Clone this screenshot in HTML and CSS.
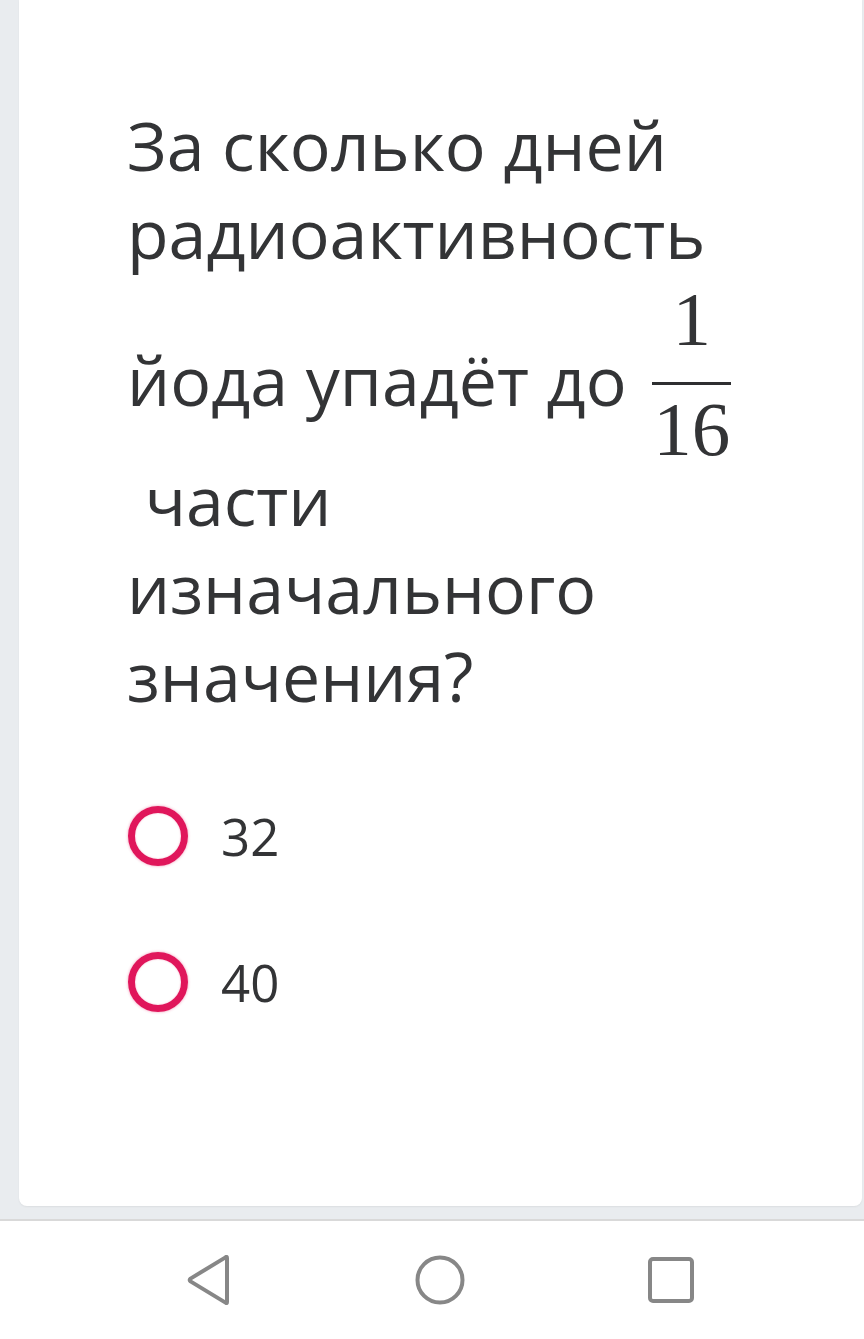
FILE: index.html
```html
<!DOCTYPE html>
<html lang="ru">
<head>
<meta charset="utf-8">
<title>Вопрос</title>
<link rel="stylesheet" href="styles.css">
</head>
<body>
<div class="screen">
  <main class="main">
    <section class="card">
      <p class="question">За сколько дней радиоактивность йода упадёт до <span class="frac"><span class="num">1</span><span class="bar"></span><span class="den">16</span></span>&#8203;&nbsp;части изначального значения?</p>
      <ul class="options">
        <li class="option"><span class="radio"></span><span class="label">32</span></li>
        <li class="option"><span class="radio"></span><span class="label">40</span></li>
      </ul>
    </section>
  </main>
  <nav class="navbar">
    <svg class="nav-icon" width="48" height="50" viewBox="0 0 48 50"><path d="M42 3 L42 47 Q42 49 40.5 47.6 L5.5 26.4 Q3.8 25 5.5 23.6 L40.5 2.4 Q42 1 42 3 Z" fill="none" stroke="#878787" stroke-width="4" stroke-linejoin="round"/></svg>
    <svg class="nav-icon" width="50" height="50" viewBox="0 0 50 50"><circle cx="25" cy="25" r="22.5" fill="none" stroke="#878787" stroke-width="4"/></svg>
    <svg class="nav-icon" width="48" height="48" viewBox="0 0 48 48"><rect x="3" y="3" width="42" height="42" rx="3" fill="none" stroke="#878787" stroke-width="4"/></svg>
  </nav>
</div>
</body>
</html>
```
FILE: styles.css
```css
html, body {
  margin: 0;
  padding: 0;
}
body {
  background: #e9ecef;
  font-family: "Open Sans", "Noto Sans", sans-serif;
  color: #333436;
}
.screen {
  width: 864px;
  height: 1339px;
  display: flex;
  flex-direction: column;
  overflow: hidden;
}
.main {
  flex: 1;
  display: flex;
  flex-direction: column;
  padding: 0 2px 13px 19px;
  border-bottom: 2px solid #d9d9d9;
}
.card {
  flex: 1;
  background: #ffffff;
  border-radius: 0 0 8px 8px;
  box-shadow: 0 1px 2px rgba(0, 0, 0, 0.06);
  padding: 101px 100px 0 108px;
}
.question {
  margin: 0;
  font-size: 68px;
  line-height: 88px;
  font-weight: 400;
}
.frac {
  display: inline-flex;
  flex-direction: column;
  align-items: center;
  vertical-align: 61px;
  margin: 14px 0 -1px 5px;
  font-family: "Liberation Serif", "Times New Roman", serif;
  font-size: 77px;
  line-height: 56px;
}
.num, .den {
  display: block;
  padding: 0 4px;
}
.bar {
  display: block;
  width: 79px;
  height: 3px;
  background: #2e2f31;
  margin: 35px 0 16px;
}
.options {
  list-style: none;
  margin: 86px 0 0;
  padding: 0;
  display: flex;
  flex-direction: column;
  gap: 86px;
}
.option {
  display: flex;
  align-items: center;
  gap: 33px;
  padding-left: 1px;
  height: 60px;
}
.radio {
  width: 46px;
  height: 46px;
  border: 7px solid #e0165b;
  border-radius: 50%;
  box-shadow: 0 0 3px rgba(224, 22, 91, 0.45), inset 0 0 2px rgba(224, 22, 91, 0.3);
}
.label {
  font-size: 51px;
  line-height: 60px;
}
.navbar {
  height: 118px;
  flex: none;
  background: #ffffff;
  display: flex;
  align-items: center;
  justify-content: center;
  gap: 182px;
  padding-left: 16px;
}
.nav-icon {
  display: block;
}
```
